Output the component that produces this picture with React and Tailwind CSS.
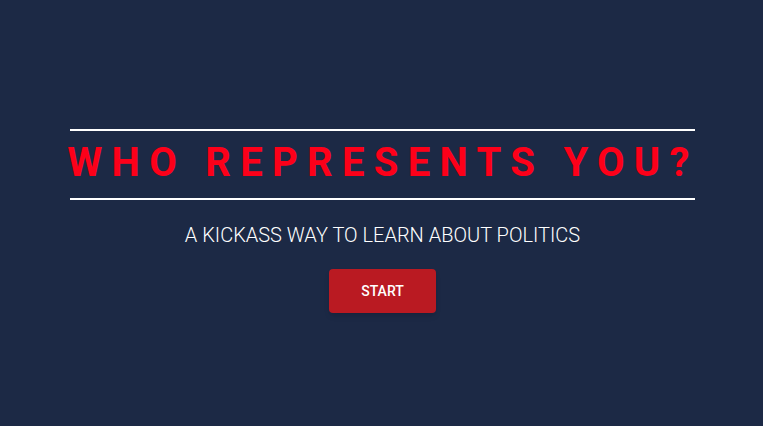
export default function App() {
  return (
    <div className="min-h-screen w-full bg-[#1c2945] flex flex-col items-center pt-[129px] pl-[2px]" style={{ fontFamily: "Roboto, 'Liberation Sans', sans-serif" }}>
      <div className="w-[625px] border-y-2 border-white pt-3 pb-[15px] flex justify-center">
        <h1 className="text-[40px] leading-none font-bold text-[#fd0019] tracking-[9.3px] pl-[1px] whitespace-nowrap">WHO REPRESENTS YOU?</h1>
      </div>
      <p className="mt-[23px] text-[20px] leading-6 font-light text-white">A KICKASS WAY TO LEARN ABOUT POLITICS</p>
      <button className="mt-[22px] w-[107px] h-[44px] rounded-sm bg-[#ba1a22] text-white text-[14px] font-medium shadow-md">START</button>
    </div>
  );
}
